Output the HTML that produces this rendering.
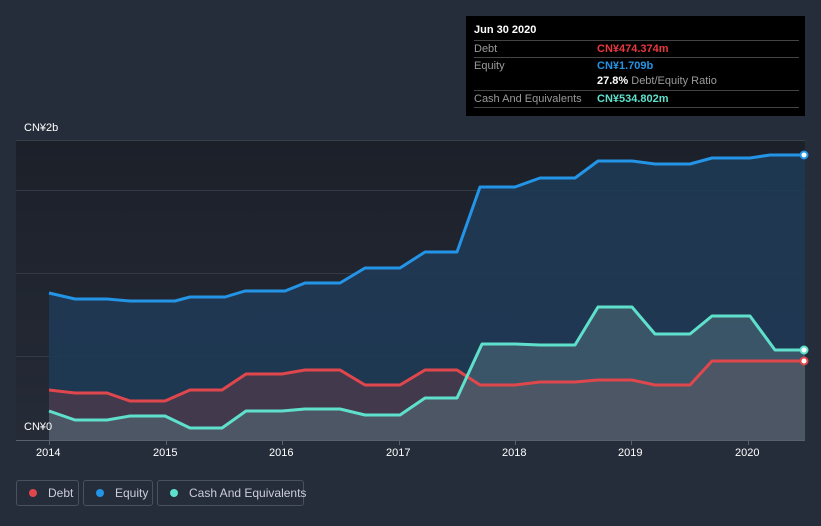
<!DOCTYPE html><html><head><style>
body{margin:0;width:821px;height:526px;background:#262d3a;font-family:"Liberation Sans",sans-serif;overflow:hidden;position:relative}
.tt{position:absolute;left:466px;top:16px;width:339px;height:100px;background:#000;color:#fff;font-size:11px}
.r{position:absolute;left:8px;right:6px;border-top:1px solid #444;height:16px;line-height:16px;color:#9a9a9a}
.v{position:absolute;left:123px;font-weight:bold}
.lg{position:absolute;top:480px;height:26px;border:1px solid #4a5060;border-radius:3px;color:#ccd;font-size:12px;line-height:24px;box-sizing:border-box;white-space:nowrap}
.lg i{display:inline-block;width:8px;height:8px;border-radius:50%;margin:0 11px 0 12px;vertical-align:0}
.ax{position:absolute;top:447px;color:#fff;font-size:11px}
</style></head><body>
<svg width="821" height="526" style="position:absolute;left:0;top:0">
<defs><linearGradient id="bg" x1="0" y1="0" x2="0" y2="1"><stop offset="0" stop-color="#1c2029"/><stop offset="1" stop-color="#252b37"/></linearGradient></defs>
<rect x="16" y="140" width="789" height="300" fill="url(#bg)"/>
<line x1="16" y1="140.5" x2="805" y2="140.5" stroke="#3a404c"/>
<g stroke="#333a47"><line x1="16" y1="190.5" x2="805" y2="190.5"/><line x1="16" y1="273.5" x2="805" y2="273.5"/><line x1="16" y1="356.5" x2="805" y2="356.5"/></g>
<path d="M49,293 L75,299 107,299 130,301 175,301 190,297 225,297 245,291 285,291 305,283 340,283 365,268 400,268 425,252 457,252 480,187 515,187 540,178 575,178 598,161 632,161 655,164 690,164 712,158 750,158 770,155 805,155 L805,440 49,440Z" fill="#1f3a55" opacity="0.9"/>
<path d="M49,390 L75,393 107,393 130,401 165,401 190,390 222,390 246,374 282,374 305,370 340,370 365,385 400,385 425,370 457,370 480,385 515,385 540,382 575,382 598,380 632,380 655,385 690,385 712,361 805,361 L805,440 49,440Z" fill="#4a3a4c" opacity="0.85"/>
<path d="M49,411 L75,420 107,420 130,416 165,416 190,428 222,428 246,411 282,411 305,409 340,409 365,415 400,415 425,398 457,398 482,344 515,344 540,345 575,345 598,307 632,307 655,334 690,334 712,316 750,316 775,350 805,350 L805,440 49,440Z" fill="#5a7a80" opacity="0.45"/>
<g fill="none" stroke-width="3" stroke-linejoin="round">
<path d="M49,293 L75,299 107,299 130,301 175,301 190,297 225,297 245,291 285,291 305,283 340,283 365,268 400,268 425,252 457,252 480,187 515,187 540,178 575,178 598,161 632,161 655,164 690,164 712,158 750,158 770,155 805,155" stroke="#2394e6"/>
<path d="M49,390 L75,393 107,393 130,401 165,401 190,390 222,390 246,374 282,374 305,370 340,370 365,385 400,385 425,370 457,370 480,385 515,385 540,382 575,382 598,380 632,380 655,385 690,385 712,361 805,361" stroke="#e0474c"/>
<path d="M49,411 L75,420 107,420 130,416 165,416 190,428 222,428 246,411 282,411 305,409 340,409 365,415 400,415 425,398 457,398 482,344 515,344 540,345 575,345 598,307 632,307 655,334 690,334 712,316 750,316 775,350 805,350" stroke="#5fe0cc"/>
</g>
<circle cx="804" cy="155" r="3.5" fill="#fff" stroke="#2394e6" stroke-width="2"/>
<circle cx="804" cy="361" r="3.5" fill="#fff" stroke="#e0474c" stroke-width="2"/>
<circle cx="804" cy="350" r="3.5" fill="#fff" stroke="#5fe0cc" stroke-width="2"/>
<line x1="16" y1="440.5" x2="805" y2="440.5" stroke="#5a6070"/>
<g stroke="#5a6070"><line x1="49.5" y1="440" x2="49.5" y2="445"/><line x1="166.5" y1="440" x2="166.5" y2="445"/><line x1="282.5" y1="440" x2="282.5" y2="445"/><line x1="399.5" y1="440" x2="399.5" y2="445"/><line x1="515.5" y1="440" x2="515.5" y2="445"/><line x1="631.5" y1="440" x2="631.5" y2="445"/><line x1="748.5" y1="440" x2="748.5" y2="445"/></g>
</svg>
<div style="position:absolute;left:24px;top:122px;color:#fff;font-size:11px">CN¥2b</div>
<div style="position:absolute;left:24px;top:421px;color:#fff;font-size:11px">CN¥0</div>
<div class="ax" style="left:36px">2014</div><div class="ax" style="left:153px">2015</div><div class="ax" style="left:269px">2016</div><div class="ax" style="left:386px">2017</div><div class="ax" style="left:502px">2018</div><div class="ax" style="left:618px">2019</div><div class="ax" style="left:735px">2020</div>
<div class="tt">
<div style="position:absolute;left:8px;top:8px;font-weight:bold">Jun 30 2020</div>
<div class="r" style="top:24px">Debt<span class="v" style="color:#e8383d">CN¥474.374m</span></div>
<div class="r" style="top:41px">Equity<span class="v" style="color:#2394e6">CN¥1.709b</span></div>
<div class="r" style="top:57px;border:0"><span class="v" style="color:#fff">27.8% <span style="color:#9a9a9a;font-weight:normal">Debt/Equity Ratio</span></span></div>
<div class="r" style="top:74px">Cash And Equivalents<span class="v" style="color:#5fe0cc">CN¥534.802m</span></div>
<div class="r" style="top:91px;height:0"></div>
</div>
<div class="lg" style="left:16px;width:63px"><i style="background:#e0474c"></i>Debt</div>
<div class="lg" style="left:83px;width:70px"><i style="background:#2394e6"></i>Equity</div>
<div class="lg" style="left:157px;width:147px"><i style="background:#5fe0cc"></i>Cash And Equivalents</div>
</body></html>
